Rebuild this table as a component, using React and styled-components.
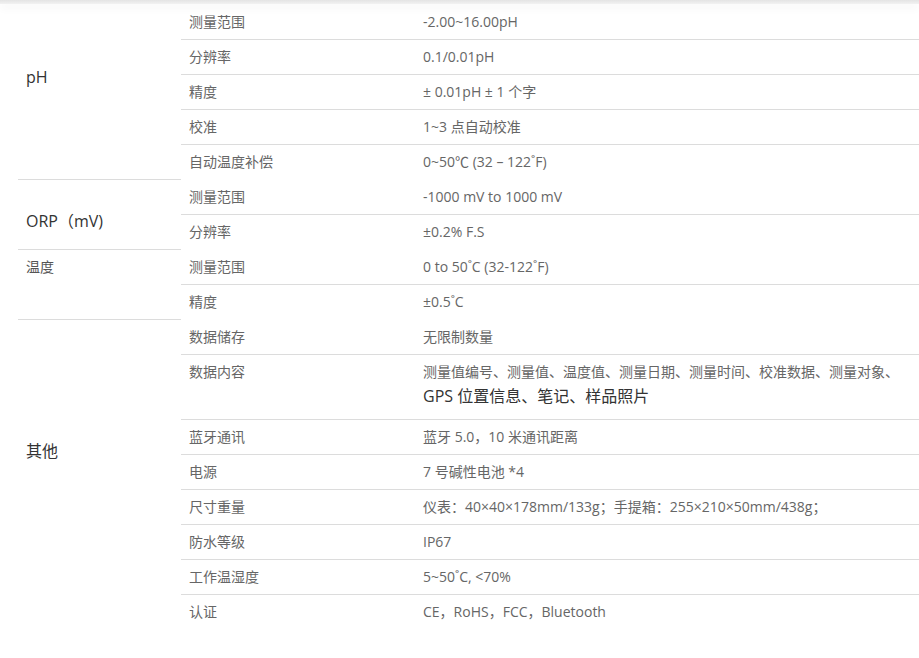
import React from "react";
import styled, { createGlobalStyle } from "styled-components";

const GlobalStyle = createGlobalStyle`
  html, body {
    margin: 0;
    padding: 0;
    background: #fff;
  }
  body {
    font-family: "Open Sans", "Noto Sans CJK SC", sans-serif;
  }
`;

const groups = [
  {
    name: "pH",
    size: 16,
    dark: true,
    pad: "0 8px 30px",
    rows: [
      ["测量范围", "-2.00~16.00pH"],
      ["分辨率", "0.1/0.01pH"],
      ["精度", "± 0.01pH ± 1 个字"],
      ["校准", "1~3 点自动校准"],
      ["自动温度补偿", "0~50℃ (32 – 122˚F)"],
    ],
  },
  {
    name: "ORP（mV)",
    size: 16,
    dark: true,
    pad: "14px 8px 0",
    rows: [
      ["测量范围", "-1000 mV to 1000 mV"],
      ["分辨率", "±0.2% F.S"],
    ],
  },
  {
    name: "温度",
    size: 14,
    top: true,
    rows: [
      ["测量范围", "0 to 50˚C (32-122˚F)"],
      ["精度", "±0.5˚C"],
    ],
  },
  {
    name: "其他",
    size: 16,
    dark: true,
    pad: "0 8px 46px",
    rows: [
      ["数据储存", "无限制数量"],
      ["数据内容", "测量值编号、测量值、温度值、测量日期、测量时间、校准数据、测量对象、", "GPS 位置信息、笔记、样品照片"],
      ["蓝牙通讯", "蓝牙 5.0，10 米通讯距离"],
      ["电源", "7 号碱性电池 *4"],
      ["尺寸重量", "仪表：40×40×178mm/133g；手提箱：255×210×50mm/438g；"],
      ["防水等级", "IP67"],
      ["工作温湿度", "5~50˚C, <70%"],
      ["认证", "CE，RoHS，FCC，Bluetooth"],
    ],
  },
];

const Page = styled.div`
  width: 919px;
  height: 658px;
  overflow: hidden;
`;

const TopBar = styled.div`
  height: 4px;
  background: linear-gradient(#e4e4e4, #f2f2f2);
  box-shadow: 0 4px 8px rgba(0, 0, 0, 0.05);
  position: relative;
`;

const Wrap = styled.div`
  padding-left: 18px;
`;

const Table = styled.table`
  width: 901px;
  border-collapse: collapse;
  table-layout: fixed;
  border-top: 1px solid #d6d6d6;
`;

const Row = styled.tr`
  border-top: 1px solid ${(p) => (p.$first ? "#dcdcdc" : "transparent")};
`;

const GroupCell = styled.td`
  vertical-align: ${(p) => (p.$top ? "top" : "middle")};
  padding: ${(p) => p.$pad || "7px 8px 8px"};
  font-size: ${(p) => p.$size}px;
  line-height: 19px;
  color: ${(p) => (p.$dark ? "#333" : "#555")};
`;

const Cell = styled.td`
  vertical-align: top;
  padding: 7px 8px 8px;
  font-size: 14px;
  line-height: 19px;
  color: #666;
  border-top: 1px solid ${(p) => (p.$line ? "#dcdcdc" : "transparent")};
`;

const Extra = styled.span`
  display: block;
  font-size: 16px;
  line-height: 30px;
  color: #333;
`;

export default function App() {
  return (
    <Page>
      <GlobalStyle />
      <TopBar />
      <Wrap>
        <Table>
          <colgroup>
            <col style={{ width: 163 }} />
            <col style={{ width: 234 }} />
            <col />
          </colgroup>
          <tbody>
            {groups.map((g, gi) =>
              g.rows.map((r, ri) => (
                <Row key={`${gi}-${ri}`} $first={ri === 0 && gi > 0}>
                  {ri === 0 && (
                    <GroupCell
                      rowSpan={g.rows.length}
                      $size={g.size}
                      $dark={g.dark}
                      $top={g.top}
                      $pad={g.pad}
                    >
                      {g.name}
                    </GroupCell>
                  )}
                  <Cell $line={ri > 0}>{r[0]}</Cell>
                  <Cell $line={ri > 0}>
                    {r[1]}
                    {r[2] && <Extra>{r[2]}</Extra>}
                  </Cell>
                </Row>
              ))
            )}
          </tbody>
        </Table>
      </Wrap>
    </Page>
  );
}
